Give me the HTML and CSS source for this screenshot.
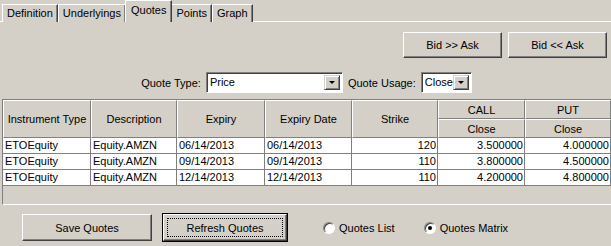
FILE: index.html
```html
<!DOCTYPE html>
<html lang="en">
<head>
    <meta charset="UTF-8">
    <title>Quotes</title>
    <link rel="stylesheet" href="styles.css">
</head>
<body>
    <div class="tabs">
        <div class="tab">Definition</div>
        <div class="tab">Underlyings</div>
        <div class="tab active">Quotes</div>
        <div class="tab">Points</div>
        <div class="tab">Graph</div>
    </div>

    <div class="toolbar">
        <div class="btn btn-bid">Bid &gt;&gt; Ask</div>
        <div class="btn btn-bid">Bid &lt;&lt; Ask</div>
    </div>

    <div class="quote-row">
        <label>Quote Type:</label>
        <div class="combo combo-type">
            <span class="combo-text">Price</span>
            <span class="combo-arrow"></span>
        </div>
        <label>Quote Usage:</label>
        <div class="combo combo-usage">
            <span class="combo-text">Close</span>
            <span class="combo-arrow"></span>
        </div>
    </div>

    <div class="grid">
        <table>
            <colgroup>
                <col style="width: 88px">
                <col style="width: 86px">
                <col style="width: 88px">
                <col style="width: 87px">
                <col style="width: 86px">
                <col style="width: 87px">
                <col style="width: 86px">
            </colgroup>
            <tr class="head-row">
                <th rowspan="2">Instrument Type</th>
                <th rowspan="2">Description</th>
                <th rowspan="2">Expiry</th>
                <th rowspan="2">Expiry Date</th>
                <th rowspan="2">Strike</th>
                <th>CALL</th>
                <th>PUT</th>
            </tr>
            <tr class="head-row">
                <th>Close</th>
                <th>Close</th>
            </tr>
            <tr>
                <td>ETOEquity</td><td>Equity.AMZN</td><td>06/14/2013</td><td>06/14/2013</td>
                <td class="num">120</td><td class="num">3.500000</td><td class="num">4.000000</td>
            </tr>
            <tr>
                <td>ETOEquity</td><td>Equity.AMZN</td><td>09/14/2013</td><td>09/14/2013</td>
                <td class="num">110</td><td class="num">3.800000</td><td class="num">4.500000</td>
            </tr>
            <tr>
                <td>ETOEquity</td><td>Equity.AMZN</td><td>12/14/2013</td><td>12/14/2013</td>
                <td class="num">110</td><td class="num">4.200000</td><td class="num">4.800000</td>
            </tr>
        </table>
    </div>

    <div class="bottom-row">
        <div class="btn btn-save">Save Quotes</div>
        <div class="btn-default">
            <div class="btn btn-refresh"><span class="focus">Refresh Quotes</span></div>
        </div>
        <div class="radio-item first">
            <span class="radio"></span>
            <span>Quotes List</span>
        </div>
        <div class="radio-item">
            <span class="radio checked"></span>
            <span>Quotes Matrix</span>
        </div>
    </div>
</body>
</html>
```

FILE: styles.css
```css
body {
    margin: 0;
    width: 611px;
    height: 246px;
    overflow: hidden;
    background-color: #d4d0c8;
    font-family: "Liberation Sans", Arial, sans-serif;
    font-size: 11px;
    color: #000;
}

/* tabs */
.tabs {
    display: flex;
    align-items: flex-end;
    height: 21px;
    padding-left: 2px;
    border-bottom: 1px solid #fff;
}

.tab {
    height: 17px;
    line-height: 17px;
    padding: 0 4px;
    margin-bottom: -1px;
    border-top: 1px solid #fff;
    border-left: 1px solid #fff;
    border-right: 1px solid #404040;
    box-shadow: inset -1px 0 #808080;
    background-color: #d4d0c8;
}

.tab.active {
    height: 21px;
    line-height: 19px;
    padding: 0 5px;
    margin-left: -1px;
    margin-right: -1px;
    margin-bottom: -1px;
    position: relative;
}

/* buttons */
.btn {
    box-sizing: border-box;
    display: flex;
    align-items: center;
    justify-content: center;
    background-color: #d4d0c8;
    border: 1px solid;
    border-color: #fff #404040 #404040 #fff;
    box-shadow: inset -1px -1px #808080;
}

.toolbar {
    display: flex;
    justify-content: flex-end;
    gap: 6px;
    margin-top: 10px;
    padding-right: 4px;
}

.btn-bid {
    width: 99px;
    height: 26px;
}

/* quote type row */
.quote-row {
    display: flex;
    justify-content: center;
    align-items: center;
    margin-top: 14px;
    height: 21px;
    padding-left: 2px;
}

.quote-row label {
    margin-right: 5px;
}

.combo {
    box-sizing: border-box;
    display: flex;
    height: 21px;
    background-color: #fff;
    border: 1px solid;
    border-color: #808080 #fff #fff #808080;
    box-shadow: inset 1px 1px #404040;
    padding: 2px;
}

.combo-type {
    width: 137px;
    margin-right: 5px;
}

.combo-usage {
    width: 51px;
}

.combo-text {
    flex: 1;
    padding-left: 1px;
    line-height: 15px;
}

.combo-arrow {
    box-sizing: border-box;
    width: 16px;
    height: 15px;
    position: relative;
    background-color: #d4d0c8;
    border: 1px solid;
    border-color: #d4d0c8 #404040 #404040 #d4d0c8;
    box-shadow: inset 1px 1px #fff, inset -1px -1px #808080;
}

.combo-arrow::after {
    content: "";
    position: absolute;
    left: 4px;
    top: 5px;
    border-left: 3px solid transparent;
    border-right: 3px solid transparent;
    border-top: 3px solid #000;
}

/* grid */
.grid {
    margin: 6px 0 0 2px;
    height: 104px;
    overflow: hidden;
    border-top: 1px solid #808080;
    border-left: 1px solid #808080;
    border-bottom: 1px solid #fff;
}

.grid table {
    border-collapse: separate;
    border-spacing: 0;
    table-layout: fixed;
    width: 608px;
}

.grid th {
    box-sizing: border-box;
    font-weight: normal;
    height: 19px;
    padding: 0;
    text-align: center;
    background-color: #d4d0c8;
    border-top: 1px solid #fff;
    border-left: 1px solid #fff;
    border-right: 1px solid #808080;
    border-bottom: 1px solid #808080;
    white-space: nowrap;
    overflow: hidden;
}

.grid td {
    box-sizing: border-box;
    height: 16px;
    padding: 0 1px 0 2px;
    background-color: #fff;
    border-right: 1px solid #808080;
    border-bottom: 1px solid #808080;
    white-space: nowrap;
    overflow: hidden;
    line-height: 15px;
}

.grid td.num {
    text-align: right;
}

/* bottom */
.bottom-row {
    display: flex;
    align-items: center;
    margin-top: 8px;
    padding-left: 22px;
    height: 29px;
}

.btn-save {
    width: 130px;
    height: 27px;
}

.btn-default {
    margin-left: 10px;
    border: 1px solid #000;
}

.btn-refresh {
    width: 124px;
    height: 27px;
    padding: 3px;
}

.btn-refresh .focus {
    box-sizing: border-box;
    width: 100%;
    height: 100%;
    display: flex;
    align-items: center;
    justify-content: center;
    border: 1px dotted #000;
}

.radio-item {
    display: flex;
    align-items: center;
    gap: 4px;
    margin-left: 29px;
}

.radio-item.first {
    margin-left: 35px;
}

.radio {
    box-sizing: border-box;
    width: 12px;
    height: 12px;
    border-radius: 50%;
    background-color: #fff;
    border: 1px solid;
    border-color: #808080 #fff #fff #808080;
    box-shadow: inset 1px 1px #404040;
    position: relative;
}

.radio.checked::after {
    content: "";
    position: absolute;
    left: 3px;
    top: 3px;
    width: 4px;
    height: 4px;
    border-radius: 50%;
    background-color: #000;
}
```
